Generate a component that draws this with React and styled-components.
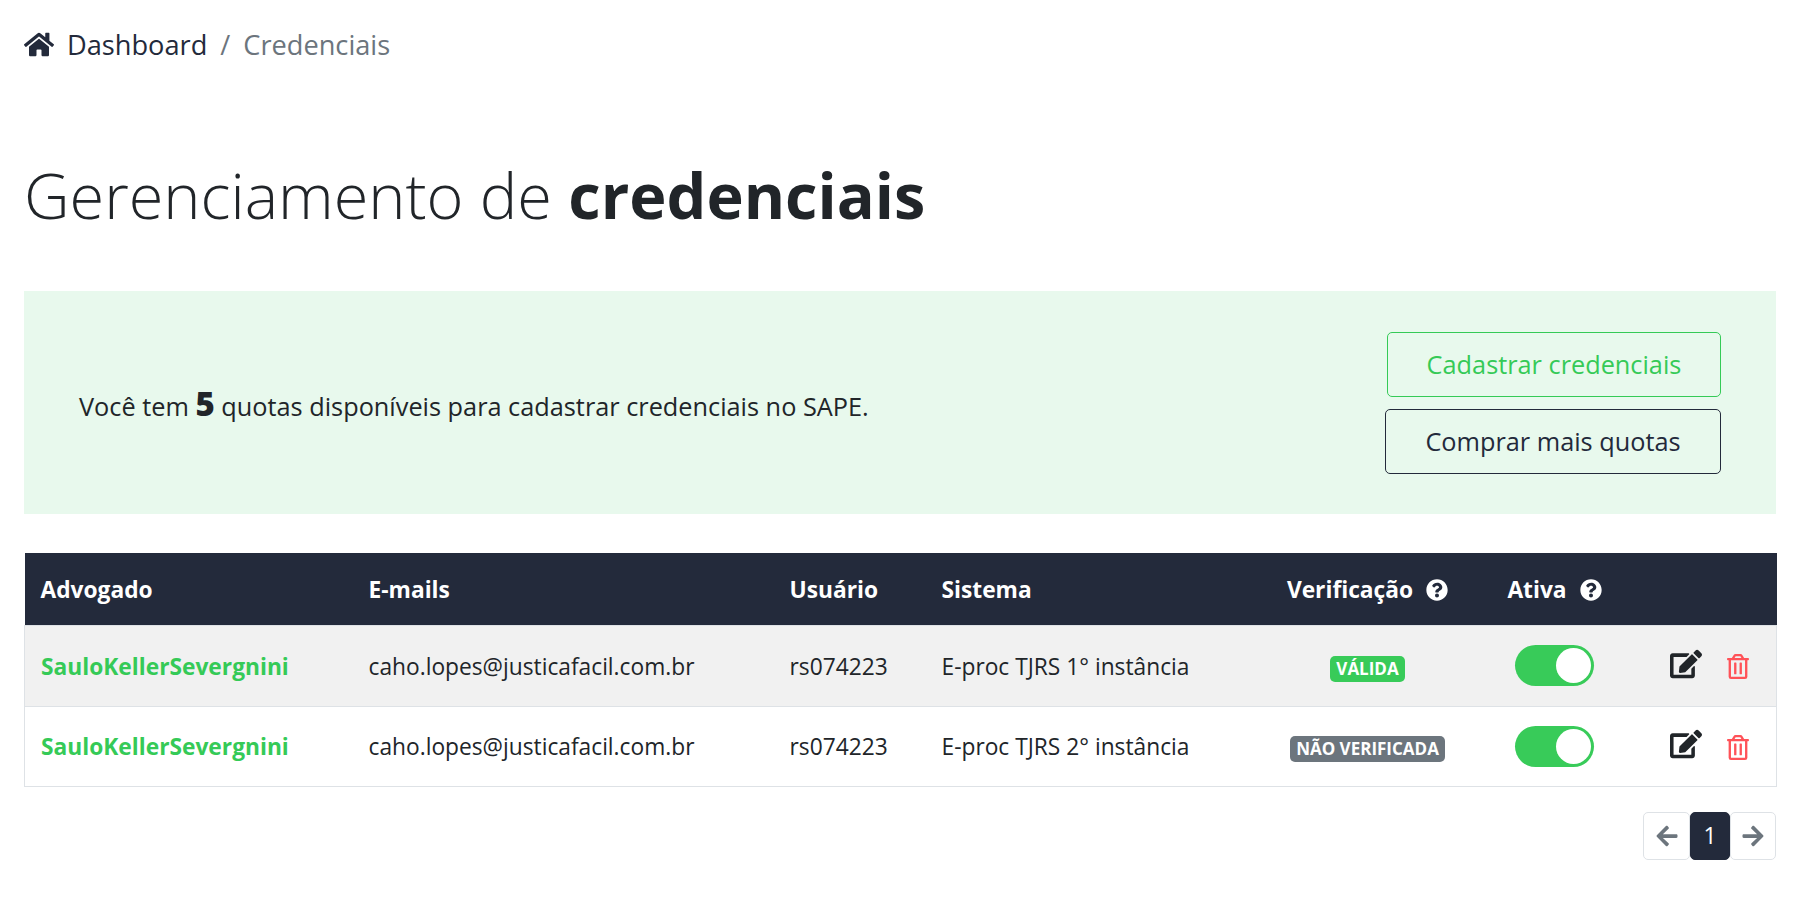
import styled, { createGlobalStyle } from 'styled-components'
import { FaHome, FaEdit, FaRegTrashAlt, FaQuestionCircle, FaArrowLeft, FaArrowRight } from 'react-icons/fa'

const GlobalStyle = createGlobalStyle`
  * {
    box-sizing: border-box;
  }

  body {
    margin: 0;
    background: #fff;
    color: #212529;
    font-family: "Open Sans", sans-serif;
  }
`

const Page = styled.main`
  padding: 23px 28px 0 24px;
`

const Breadcrumb = styled.nav`
  display: flex;
  align-items: center;
  height: 42px;
  font-size: 27.2px;
  color: #232a3b;

  & > svg {
    width: 30px;
    height: 27px;
    margin-right: 13px;
  }
`

const Separator = styled.span`
  margin: 0 13px;
  color: #6c757d;
`

const Current = styled.span`
  color: #6c757d;
`

const Title = styled.h1`
  margin: 83px 0 49px;
  font-size: 63px;
  line-height: 94px;
  font-weight: 300;

  & > strong {
    font-weight: 700;
  }
`

const Banner = styled.section`
  display: flex;
  align-items: center;
  justify-content: space-between;
  height: 223px;
  padding: 0 55px;
  margin-bottom: 39px;
  background: #e8f9ed;
  font-size: 25.3px;
`

const BannerText = styled.span`
  padding-top: 2px;
`

const Count = styled.strong`
  font-size: 33px;
  font-weight: 800;
`

const Actions = styled.div`
  display: flex;
  flex-direction: column;
  align-items: flex-end;
  gap: 12px;
`

const OutlineButton = styled.button`
  width: ${(p) => p.$width}px;
  height: 65px;
  padding: 0;
  border: 1px solid ${(p) => p.$color};
  border-radius: 5px;
  background: transparent;
  color: ${(p) => p.$color};
  font-family: inherit;
  font-size: 25.3px;
`

const Table = styled.table`
  width: 100%;
  table-layout: fixed;
  border-collapse: collapse;
  font-size: 22.75px;
`

const Head = styled.th`
  height: 72px;
  padding: 2px 16px 0;
  background: #232a3b;
  color: #fff;
  font-size: 22.75px;
  font-weight: 700;
  text-align: ${(p) => (p.$center ? 'center' : 'left')};

  & > svg {
    width: 22px;
    height: 22px;
    margin-left: 13px;
    vertical-align: -3px;
  }
`

const Row = styled.tr`
  height: ${(p) => p.$height}px;
  background: ${(p) => (p.$striped ? '#f1f1f1' : '#fff')};
  border: 1px solid #dee2e6;
`

const Cell = styled.td`
  padding: ${(p) => (p.$nudge ? '2px' : '0')} 16px 0;
  text-align: ${(p) => (p.$center ? 'center' : 'left')};
  white-space: nowrap;
`

const Lawyer = styled.a`
  color: #35ca57;
  font-weight: 700;
`

const Badge = styled.span`
  display: inline-block;
  padding: 3px 6px;
  border-radius: 5px;
  background: ${(p) => p.$color};
  color: #fff;
  font-size: 17px;
  line-height: 20px;
  font-weight: 700;
`

const Switch = styled.span`
  display: inline-flex;
  justify-content: flex-end;
  align-items: center;
  width: 79px;
  height: 41px;
  padding: 3px;
  border-radius: 21px;
  background: #38cb59;
  vertical-align: middle;

  &::after {
    content: '';
    width: 35px;
    height: 35px;
    border-radius: 50%;
    background: #fff;
  }
`

const IconRow = styled.div`
  display: flex;
  justify-content: center;
  align-items: center;
  gap: 25px;
  margin-left: -1px;
`

const EditIcon = styled(FaEdit)`
  width: 32px;
  height: 30px;
  color: #212529;
  margin-top: -4px;
`

const TrashIcon = styled(FaRegTrashAlt)`
  width: 22px;
  height: 25px;
  color: #ff5258;
  margin-top: 2px;
`

const Pagination = styled.nav`
  display: flex;
  justify-content: flex-end;
  margin-top: 25px;
`

const PageItem = styled.span`
  display: flex;
  align-items: center;
  justify-content: center;
  width: ${(p) => p.$width}px;
  height: 48px;
  border: 1px solid ${(p) => (p.$active ? '#232a3b' : '#dee2e6')};
  border-radius: 5px;
  background: ${(p) => (p.$active ? '#232a3b' : '#fff')};
  color: ${(p) => (p.$active ? '#fff' : '#6c757d')};
  font-size: 22.75px;
`

const rows = [
  { system: 'E-proc TJRS 1° instância', status: 'VÁLIDA', color: '#38cb59', height: 81 },
  { system: 'E-proc TJRS 2° instância', status: 'NÃO VERIFICADA', color: '#6c757d', height: 80 }
]

export default function App() {
  return (
    <Page>
      <GlobalStyle />
      <Breadcrumb>
        <FaHome />
        Dashboard
        <Separator>/</Separator>
        <Current>Credenciais</Current>
      </Breadcrumb>

      <Title>
        Gerenciamento de <strong>credenciais</strong>
      </Title>

      <Banner>
        <BannerText>
          Você tem <Count>5</Count> quotas disponíveis para cadastrar credenciais no SAPE.
        </BannerText>
        <Actions>
          <OutlineButton $width={334} $color="#35ca57">Cadastrar credenciais</OutlineButton>
          <OutlineButton $width={336} $color="#232a3b">Comprar mais quotas</OutlineButton>
        </Actions>
      </Banner>

      <Table>
        <colgroup>
          <col width="328" />
          <col width="421" />
          <col width="152" />
          <col width="345" />
          <col width="194" />
          <col width="180" />
          <col width="132" />
        </colgroup>
        <thead>
          <tr>
            <Head>Advogado</Head>
            <Head>E-mails</Head>
            <Head>Usuário</Head>
            <Head>Sistema</Head>
            <Head $center>Verificação<FaQuestionCircle /></Head>
            <Head $center>Ativa<FaQuestionCircle /></Head>
            <Head />
          </tr>
        </thead>
        <tbody>
          {rows.map((row, i) => (
            <Row key={row.system} $striped={i === 0} $height={row.height}>
              <Cell $nudge={i === 0}><Lawyer>SauloKellerSevergnini</Lawyer></Cell>
              <Cell $nudge={i === 0}>caho.lopes@justicafacil.com.br</Cell>
              <Cell $nudge={i === 0}>rs074223</Cell>
              <Cell $nudge={i === 0}>{row.system}</Cell>
              <Cell $center $nudge={i === 0}><Badge $color={row.color}>{row.status}</Badge></Cell>
              <Cell $center><Switch /></Cell>
              <Cell>
                <IconRow>
                  <EditIcon />
                  <TrashIcon />
                </IconRow>
              </Cell>
            </Row>
          ))}
        </tbody>
      </Table>

      <Pagination>
        <PageItem $width={47}><FaArrowLeft size={24} /></PageItem>
        <PageItem $width={40} $active>1</PageItem>
        <PageItem $width={46}><FaArrowRight size={24} /></PageItem>
      </Pagination>
    </Page>
  )
}
